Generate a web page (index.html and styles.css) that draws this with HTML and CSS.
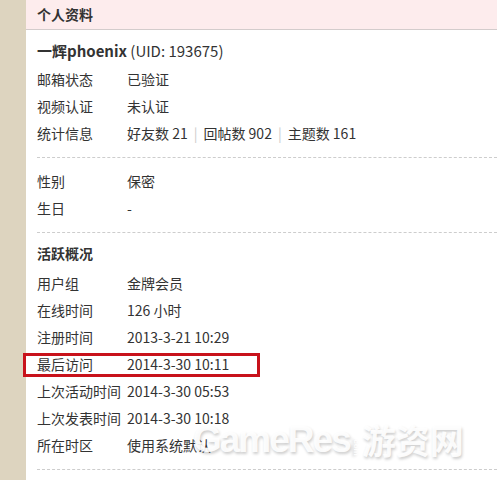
FILE: index.html
```html
<!DOCTYPE html>
<html lang="zh-CN">
<head>
  <meta charset="UTF-8">
  <title>个人资料</title>
  <link rel="stylesheet" href="styles.css">
</head>
<body>
  <div class="page">
    <aside class="side"></aside>

    <main class="profile">
      <header class="profile-head">个人资料</header>

      <section class="block">
        <div class="user-name"><b>一辉phoenix</b> (UID: 193675)</div>
        <div class="row"><span class="label">邮箱状态</span><span>已验证</span></div>
        <div class="row"><span class="label">视频认证</span><span>未认证</span></div>
        <div class="row">
          <span class="label">统计信息</span>
          <span>好友数 21<i class="pipe">|</i>回帖数 902<i class="pipe">|</i>主题数 161</span>
        </div>
      </section>

      <section class="block">
        <div class="row"><span class="label">性别</span><span>保密</span></div>
        <div class="row"><span class="label">生日</span><span>-</span></div>
      </section>

      <section class="block block-active">
        <h2 class="block-title">活跃概况</h2>
        <div class="row"><span class="label">用户组</span><span>金牌会员</span></div>
        <div class="row"><span class="label">在线时间</span><span>126 小时</span></div>
        <div class="row"><span class="label">注册时间</span><span>2013-3-21 10:29</span></div>
        <div class="row marked"><span class="label">最后访问</span><span>2014-3-30 10:11</span></div>
        <div class="row"><span class="label">上次活动时间</span><span>2014-3-30 05:53</span></div>
        <div class="row"><span class="label">上次发表时间</span><span>2014-3-30 10:18</span></div>
        <div class="row"><span class="label">所在时区</span><span>使用系统默认</span></div>
      </section>
    </main>

    <div class="watermark">
      <span class="wm-latin">GameRes</span><span class="dotcom">.com</span><span class="wm-cjk">游资网</span>
    </div>
  </div>
</body>
</html>
```

FILE: styles.css
```css
body {
  margin: 0;
  background-color: #fff;
  font-family: "Noto Sans CJK SC", "Noto Sans", sans-serif;
  font-size: 14px;
  color: #333;
}

.page {
  position: relative;
  display: flex;
  height: 480px;
  overflow: hidden;
}

.side {
  width: 26px;
  flex: none;
  background-color: #ddd4bf;
}

.profile {
  flex: 1;
}

.profile-head {
  height: 29px;
  line-height: 29px;
  padding-left: 11px;
  background-color: #fdeced;
  border-bottom: 1px solid #d3cccc;
  font-weight: bold;
}

.block {
  margin-left: 11px;
  padding: 10px 0;
  border-bottom: 1px dashed #cdcdcd;
}

.block:first-of-type {
  padding-top: 6px;
}

.block-active {
  padding-top: 7px;
}

.user-name {
  height: 30px;
  line-height: 30px;
  font-size: 15px;
}

.user-name b {
  font-weight: bold;
}

.block-title {
  margin: 0;
  height: 30px;
  line-height: 26px;
  font-size: 14px;
  font-weight: bold;
}

.row {
  display: flex;
  height: 27px;
  line-height: 27px;
}

.label {
  width: 90px;
  flex: none;
}

.pipe {
  font-style: normal;
  color: #ccc;
  margin: 0 6px;
}

.marked {
  position: relative;
}

.marked::after {
  content: "";
  position: absolute;
  left: -14px;
  top: 2px;
  width: 237px;
  height: 24px;
  box-sizing: border-box;
  border: 3px solid #c8121b;
}

.watermark {
  position: absolute;
  left: 193px;
  top: 426px;
  height: 28px;
  display: flex;
  align-items: center;
  font-weight: bold;
  color: rgba(255, 255, 255, 0.92);
  text-shadow: 1px 2px 3px rgba(0, 0, 0, 0.2);
  white-space: nowrap;
  line-height: 28px;
}

.wm-latin {
  font-family: "Liberation Sans", sans-serif;
  font-size: 37px;
  letter-spacing: -2px;
}

.dotcom {
  display: inline-block;
  font-family: "Liberation Sans", sans-serif;
  font-size: 8px;
  line-height: 10px;
  transform: rotate(90deg);
  width: 10px;
  margin: 4px 1px 0 1px;
}

.wm-cjk {
  font-size: 34px;
}
```
